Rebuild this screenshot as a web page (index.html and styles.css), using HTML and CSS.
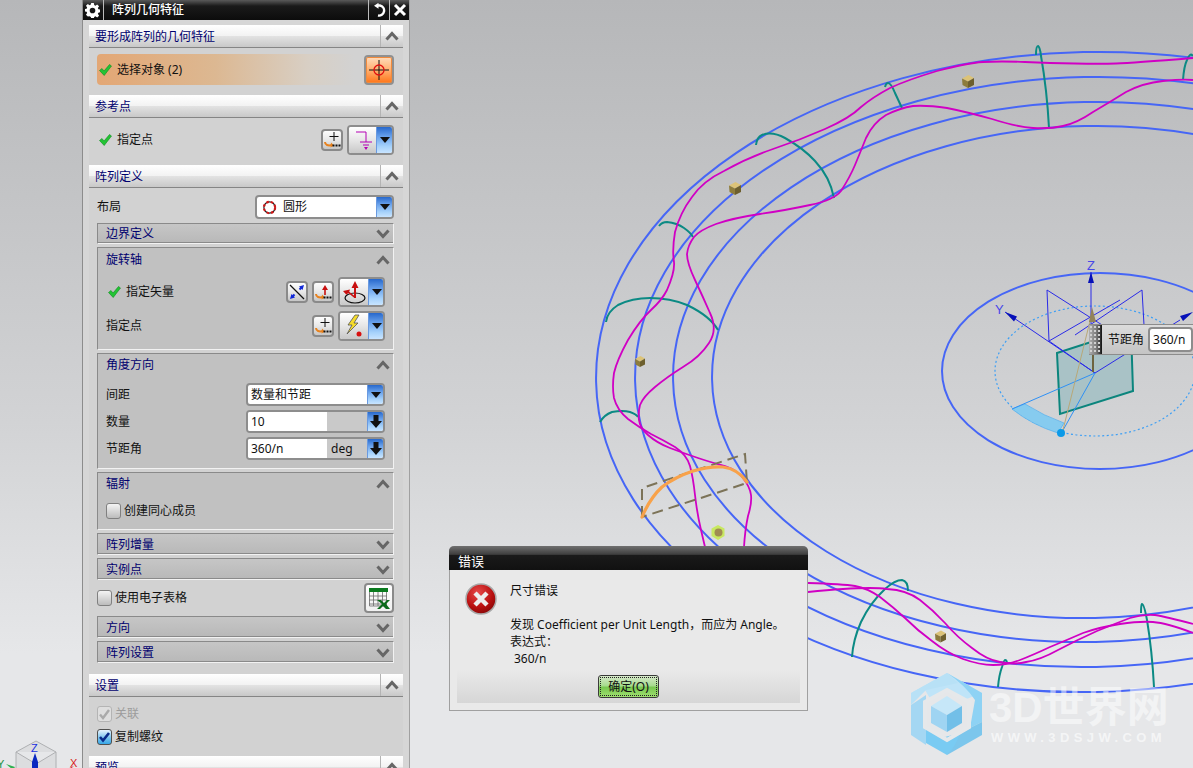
FILE: index.html
```html
<!DOCTYPE html>
<html lang="zh">
<head>
<meta charset="utf-8">
<title>阵列几何特征</title>
<link rel="stylesheet" href="styles.css">
</head>
<body>
<svg class="defs" width="0" height="0" aria-hidden="true">
  <symbol id="up" viewBox="0 0 14 10"><path d="M1.5 8.5 7 2.5l5.5 6" fill="none" stroke="#666" stroke-width="3"/></symbol>
  <symbol id="down" viewBox="0 0 14 10"><path d="M1.5 1.5 7 7.5l5.5-6" fill="none" stroke="#666" stroke-width="3"/></symbol>
  <symbol id="check" viewBox="0 0 13 12"><path d="M0.5 6.5 3 4.5 5 7 10.5 0.5 12.5 2 5.2 11.5z" fill="#22c433" stroke="#0f8a20" stroke-width=".6"/></symbol>
  <symbol id="tri" viewBox="0 0 10 6"><path d="M0 0h10L5 6z" fill="#111"/></symbol>
  <symbol id="blockdown" viewBox="0 0 12 13"><path d="M3.5 0h5v6H12L6 13 0 6h3.5z" fill="#111"/></symbol>
  <symbol id="construct" viewBox="0 0 18 18">
    <path d="M2 11c0 3 3 4 7 3" fill="none" stroke="#e8821e" stroke-width="2"/><path d="M8 11.500 11 14.500 7.500 16.500z" fill="#e8821e"/>
    <path d="M9.500 12.500h2v2h-2zM12.500 12.500h2v2h-2zM15.500 12.500h2v2h-2z" fill="#111" transform="translate(0 1)"/>
  </symbol>
  <symbol id="cube" viewBox="0 0 12 13">
    <path d="M0 3.500 6.500 0 12 3 6 6.500z" fill="#dcc378"/><path d="M0 3.500 6 6.500V13L.5 10z" fill="#8d7c3c"/><path d="M12 3 6 6.500V13l6-3z" fill="#6d5f2e"/>
  </symbol>
</svg>

<main class="app">
  <svg class="scene" viewBox="0 0 1193 768" width="1193" height="768" aria-hidden="true">
    <g class="blue" transform="rotate(-1.2 1090 372)">
      <ellipse cx="1090" cy="372" rx="494" ry="320"/>
      <ellipse cx="1090" cy="372" rx="455" ry="295"/>
      <ellipse cx="1090" cy="372" rx="417" ry="270"/>
      <ellipse cx="1090" cy="372" rx="378" ry="246"/>
    </g>
    <g class="teal">
      <path d="M756 145Q757 137 762 135 772 131 785 138 803 148 815 161 830 177 834 198"/>
      <path d="M659 226Q662 222 667 222 677 223 684 228 691 233 693 237"/>
      <path d="M606 322Q607 312 618 305 632 298 650 298 670 298 687 305 710 316 718 330"/>
      <path d="M600 422Q604 415 612 412 623 410 630 412 636 414 638 417"/>
      <path d="M885 87Q886 83 888 83 891 83 895 93L902 108"/>
      <path d="M1036 55Q1036 46 1038 46 1040 47 1041 56 1047 90 1049 128"/>
      <path d="M1183 80Q1184 66 1187 60 1190 52 1193 56"/>
      <path d="M852 657Q853 640 861 622 870 603 885 589 895 580 902 580 908 581 908 591"/>
      <path d="M998 687Q999 675 1002 667 1004 660 1005 660 1007 660 1007 664"/>
      <path d="M1141 613Q1141 605 1142 604 1144 604 1147 620 1152 650 1154 687"/>
    </g>
    <g class="magenta">
      <path d="M1193 58Q1133 63 1116 63.500 1100 64 1075 63.500 1050 63 1025 62 1000 61 983 62 967 63 937 71 907 80 890 88 873 97 861 107 850 118 825 129 800 140 773 149 747 158 724 171 703 181 692 197 680 213 675 232 672 250 674 262 675 272 667 290 662 300 651 310 640 320 628 340 617 360 614 373 612 387 614 398 617 410 628 419 640 428 651 434 663 440 675 447 687 455 690 466 693 477 695 495 697 513 701 530L705 547"/>
      <path d="M1193 80Q1183 79 1163 81 1143 83 1126 92 1110 102 1093 112 1077 123 1063 126 1050 129 1033 128 1017 127 992 119 967 112 947 108 927 105 913 106 900 108 886 115 873 123 866 138 860 153 855 165 850 177 841 191 834 200 810 205 787 210 760 214 733 218 716 224 700 230 694 237 688 245 687 254 687 263 695 280 703 297 710 313 718 330 709 343 700 357 683 367 667 377 655 387 643 397 640 405 638 413 639 420 640 428 648 435 657 443 670 448 683 453 698 458 713 463 725 466 737 470 743 478 750 487 751 495 752 503 748 516 745 530 744 547"/>
      <path d="M808 583Q843 584 855 586 867 588 880 597 893 607 905 618 917 630 932 641 947 653 963 659 980 665 993 665 1007 665 1020 660 1033 655 1050 647 1067 640 1083 633 1100 627 1120 624 1140 621 1153 622 1167 623 1193 633"/>
      <path d="M808 592Q867 586 887 589 907 590 920 600 933 610 945 623 957 637 972 648 987 660 1000 662 1013 665 1026 662 1040 660 1058 650 1077 640 1097 631 1117 623 1130 618 1143 614 1155 615 1167 617 1193 624"/>
    </g>
    <use href="#cube" x="962" y="75" width="12" height="13"/>
    <use href="#cube" x="729" y="182" width="12" height="13"/>
    <use href="#cube" x="635" y="355" width="10" height="13"/>
    <use href="#cube" x="935" y="630" width="11" height="13"/>
    <path class="hexgreen" d="M718 525l6.500 3.500v7.500l-6.500 4-6.500-4v-7.500z"/>
    <circle class="ball" cx="718.500" cy="532.500" r="4"/>
    <path class="dashed" d="M642 517V488L745 454 747 483z"/>
    <path class="orange" d="M642 517Q650 498 662 487 675 477 693 471 710 466 723 467 738 469 747 482"/>

    <ellipse class="single" cx="1100" cy="371" rx="158" ry="98"/>
    <ellipse class="dots" cx="1095" cy="371" rx="100" ry="65"/>
    <path class="plane" d="M1057 353 1131 329 1133 391 1060 414z"/>
    <path class="thin" d="M1047 290 1049 341 1095 373 1005 312M1047 290 1110 330M1049 341 1120 300M1142 290 1144 325M1142 290 1075 335M1095 373 1180 320M1091 272V340"/>
    <path class="band" d="M1012 409Q1032 425 1058 433L1064 423Q1044 416 1025 404z"/>
    <path class="ray" d="M1095 373 1062 432M1095 373 1012 409"/>
    <path class="shaft" d="M1063 430 1092 313"/>
    <path class="cone" d="M1092 307 1096 322H1089z"/>
    <path class="darkline" d="M1093 340V372"/>
    <path class="arrow" d="M1091 272l-3 11h6zM1005 312l12 4.500-3 5zM1193 312l-13 4 3 5z"/>
    <circle class="sphere" cx="1061" cy="433" r="4"/>
    <text class="axis" x="1087" y="270">Z</text>
    <text class="axis" x="995" y="314">Y</text>

    <g class="triad">
      <path class="cubeline" d="M36 741 56 752V778L36 790 16 778V752zM16 752 36 764 56 752M36 764V790"/>
      <path class="tz" d="M35 753l3 9v8h-6v-8z"/>
      <path class="tx" d="M74 766 60 772l2 4z"/>
      <path class="ty" d="M6 764l9 3-2 3z"/>
      <text class="tl-z" x="31" y="752">Z</text>
      <text class="tl-y" x="-3" y="768">Y</text>
      <text class="tl-x" x="70" y="767">X</text>
    </g>

    <g class="logo">
      <path fill="#bfe4f8" d="M947 673 982 693 964 700 947 690 931 700 925 690 911 693z"/>
      <path fill="#8ed2f4" d="M947 673 982 693V722L970 728 975 700Q965 685 947 673z"/>
      <path fill="#7cc6ec" d="M982 722V735L947 755 955 737 970 728z"/>
      <path fill="#79cbf3" d="M947 755 926 743 926 727 945 737 960 733Q955 748 947 755z"/>
      <path fill="#a4d7f3" d="M911 735V705L926 695V745z"/>
      <path fill="#b8e1f6" d="M911 693 947 673 958 683 926 690 911 705z"/>
      <path class="frame" d="M947 690 969 702V727L947 740 925 727V702z"/>
      <path fill="#c6e7f8" d="M947 696 962 706 947 715 931 706z"/>
      <path fill="#9fd4f2" d="M931 706 947 715V732L931 723z"/>
      <path fill="#72bfe8" d="M962 706 947 715V732L962 723z"/>
    </g>
    <text class="wm-big" x="989" y="722">3D世界网</text>
    <text class="wm-small" x="991" y="742">WWW.3DSJW.COM</text>
  </svg>

  <section class="panel">
    <header class="titlebar">
      <span class="tb-cell tb-gear">
        <svg width="15" height="15" viewBox="0 0 16 16"><path fill="#fff" d="M6.600 0h2.800l.4 2.200 1.300.6L13 1.500l2 2-1.300 1.900.6 1.300 2.200.4v2.800l-2.200.4-.6 1.300 1.300 1.900-2 2-1.900-1.300-1.300.6-.4 2.200H6.600l-.4-2.200-1.300-.6L3 14.500l-2-2 1.300-1.900-.6-1.300L-.5 9V6.600l2.200-.4.600-1.300L1 3l2-2 1.900 1.300 1.300-.6zM8 5a3 3 0 1 0 0 6 3 3 0 0 0 0-6z"/></svg>
      </span>
      <span class="tb-title">阵列几何特征</span>
      <span class="tb-cell tb-btn">
        <svg width="14" height="14" viewBox="0 0 14 14"><path fill="none" stroke="#fff" stroke-width="2.400" d="M6 12.500a5 5 0 0 0 2-10H5"/><path fill="#fff" d="M6.500 0v6L2 3z" transform="translate(0 -.200)"/></svg>
      </span>
      <span class="tb-cell tb-btn">
        <svg width="14" height="14" viewBox="0 0 14 14"><path fill="none" stroke="#fff" stroke-width="3" d="M2 2l10 10M12 2 2 12"/></svg>
      </span>
    </header>

    <div class="sec-head"><span class="head-title">要形成阵列的几何特征</span><span class="chev-cell"><svg class="chev"><use href="#up"/></svg></span></div>
    <div class="sec-body body-select">
      <div class="row">
        <div class="pick">
          <svg class="check"><use href="#check"/></svg>
          <span class="pick-text">选择对象 (2)</span>
        </div>
        <button class="btn btn-orange" type="button">
          <svg width="20" height="20" viewBox="0 0 20 20"><path d="M0 10h20M10 0v20" stroke="#111" stroke-width="1"/><circle cx="10" cy="10" r="5" fill="none" stroke="#e01010" stroke-width="1.300"/></svg>
        </button>
      </div>
    </div>

    <div class="sec-head"><span class="head-title">参考点</span><span class="chev-cell"><svg class="chev"><use href="#up"/></svg></span></div>
    <div class="sec-body body-point">
      <div class="row">
        <svg class="check"><use href="#check"/></svg>
        <span class="check-label">指定点</span>
        <div class="tools">
          <button class="btn btn-small" type="button"><svg width="18" height="18" viewBox="0 0 18 18"><use href="#construct"/><path d="M11 1v9M6.500 5.500h9" stroke="#111"/></svg></button>
          <div class="combo combo-icon">
            <span class="icon-face"><svg width="24" height="22" viewBox="0 0 24 22"><path d="M5 3h10v10M9 13h12M12 16h6" fill="none" stroke="#b400b4" stroke-width="1"/><path d="M13 18h4l-2 3z" fill="#b400b4"/></svg></span>
            <span class="drop"><svg class="tri"><use href="#tri"/></svg></span>
          </div>
        </div>
      </div>
    </div>

    <div class="sec-head"><span class="head-title">阵列定义</span><span class="chev-cell"><svg class="chev"><use href="#up"/></svg></span></div>
    <div class="sec-body body-def">
      <div class="row row-layout">
        <span>布局</span>
        <div class="combo combo-layout">
          <span class="combo-value"><svg class="ring" width="15" height="15" viewBox="0 0 15 15"><circle cx="7.500" cy="7.500" r="5.600" fill="none" stroke="#222" stroke-width="1.200"/><circle cx="7.500" cy="7.500" r="5.600" fill="none" stroke="#d01818" stroke-width="2.200" stroke-dasharray="2.500 2"/></svg>圆形</span>
          <span class="drop"><svg class="tri"><use href="#tri"/></svg></span>
        </div>
      </div>

      <div class="sub sub-closed first"><span class="sub-title">边界定义</span><svg class="chev"><use href="#down"/></svg></div>

      <div class="sub sub-axis">
        <div class="sub-head"><span class="sub-title">旋转轴</span><svg class="chev"><use href="#up"/></svg></div>
        <div class="sub-rows rows-axis">
          <div class="row">
            <svg class="check"><use href="#check"/></svg>
            <span class="check-label">指定矢量</span>
            <div class="tools">
              <button class="btn btn-small" type="button"><svg width="18" height="18" viewBox="0 0 18 18"><path d="M2 2l14 14" stroke="#111" stroke-width="1.300"/><path d="M16 2l-5 1.500L14.500 7zM2 16l5-1.500L3.500 11z" fill="#1028d8"/><path d="M14 4l-2.500 2.500M4 14l2.500-2.500" stroke="#1028d8" stroke-width="2"/></svg></button>
              <button class="btn btn-small" type="button"><svg width="18" height="18" viewBox="0 0 18 18"><use href="#construct"/><path d="M11 2l3 5h-2.200v5h-1.600V7H8z" fill="#c81010"/></svg></button>
              <div class="combo combo-icon">
                <span class="icon-face"><svg width="28" height="26" viewBox="0 0 28 26"><ellipse cx="15" cy="19" rx="10" ry="5" fill="none" stroke="#111" stroke-width="1.200"/><path d="M15 2l3.500 7h-2.500v10h-2V9h-2.500z" fill="#c81010"/><path d="M3 12l7-1.500-.8 2.300 6 4.700-1 1.200-6-4.700-1.800 1.700z" fill="#c81010"/></svg></span>
                <span class="drop"><svg class="tri"><use href="#tri"/></svg></span>
              </div>
            </div>
          </div>
          <div class="row">
            <span>指定点</span>
            <div class="tools">
              <button class="btn btn-small" type="button"><svg width="18" height="18" viewBox="0 0 18 18"><use href="#construct"/><path d="M11 1v9M6.500 5.500h9" stroke="#111"/></svg></button>
              <div class="combo combo-icon">
                <span class="icon-face"><svg width="28" height="26" viewBox="0 0 28 26"><path d="M15 2 8 12h4l-5 9 11-11h-4l5-8z" fill="#f6dc2a" stroke="#555" stroke-width=".8"/><circle cx="19" cy="21" r="2.500" fill="#d81010"/></svg></span>
                <span class="drop"><svg class="tri"><use href="#tri"/></svg></span>
              </div>
            </div>
          </div>
        </div>
      </div>

      <div class="sub sub-angle">
        <div class="sub-head"><span class="sub-title">角度方向</span><svg class="chev"><use href="#up"/></svg></div>
        <div class="sub-rows rows-angle">
          <div class="row row-between">
            <span>间距</span>
            <div class="combo combo-field">
              <span class="combo-value">数量和节距</span>
              <span class="drop"><svg class="tri"><use href="#tri"/></svg></span>
            </div>
          </div>
          <div class="row row-between">
            <span>数量</span>
            <div class="combo combo-field">
              <span class="field-value">10</span><span class="field-unit"></span>
              <span class="drop"><svg class="block"><use href="#blockdown"/></svg></span>
            </div>
          </div>
          <div class="row row-between">
            <span>节距角</span>
            <div class="combo combo-field">
              <span class="field-value">360/n</span><span class="field-unit">deg</span>
              <span class="drop"><svg class="block"><use href="#blockdown"/></svg></span>
            </div>
          </div>
        </div>
      </div>

      <div class="sub sub-radial">
        <div class="sub-head"><span class="sub-title">辐射</span><svg class="chev"><use href="#up"/></svg></div>
        <div class="sub-rows rows-radial">
          <div class="row row-check"><span class="box"></span><span>创建同心成员</span></div>
        </div>
      </div>

      <div class="sub sub-closed"><span class="sub-title">阵列增量</span><svg class="chev"><use href="#down"/></svg></div>
      <div class="sub sub-closed"><span class="sub-title">实例点</span><svg class="chev"><use href="#down"/></svg></div>

      <div class="row row-sheet">
        <span class="box"></span><span class="sheet-label">使用电子表格</span>
        <button class="btn btn-sheet" type="button">
          <svg width="22" height="24" viewBox="0 0 22 24"><path d="M1 2h19v4H1z" fill="#0a7a1e"/><path d="M1.500 6v14h17V6M1 10h18M1 14h18M1 18h18M5.500 6v14M10 6v14M14.500 6v14" fill="none" stroke="#6a6a6a" stroke-width=".8"/><path d="M9 14h4l3 3 3-3h3l-4 4 4 5h-4l-3-3-3 3H9l5-5z" fill="#0a6a1a"/></svg>
        </button>
      </div>

      <div class="sub sub-closed"><span class="sub-title">方向</span><svg class="chev"><use href="#down"/></svg></div>
      <div class="sub sub-closed last"><span class="sub-title">阵列设置</span><svg class="chev"><use href="#down"/></svg></div>
    </div>

    <div class="sec-head"><span class="head-title">设置</span><span class="chev-cell"><svg class="chev"><use href="#up"/></svg></span></div>
    <div class="sec-body body-settings">
      <div class="row row-check disabled">
        <span class="box box-off"><svg width="13" height="13" viewBox="0 0 13 13"><path d="M2 6.500 5 10l6-8" fill="none" stroke="#aaa" stroke-width="2.400"/></svg></span><span>关联</span>
      </div>
      <div class="row row-check">
        <span class="box box-on"><svg width="13" height="13" viewBox="0 0 13 13"><path d="M2 6 5 9.500l6-7.500" fill="none" stroke="#0a2a8a" stroke-width="2.600"/></svg></span><span>复制螺纹</span>
      </div>
    </div>
    <div class="sec-head"><span class="head-title">预览</span><span class="chev-cell"><svg class="chev"><use href="#up"/></svg></span></div>
  </section>

  <div class="handle">
    <span class="grip"></span>
    <span class="handle-label">节距角</span>
    <span class="handle-input">360/n</span>
    <span class="handle-drop"></span>
  </div>

  <section class="dialog">
    <header class="dlg-title">错误</header>
    <div class="dlg-main">
      <svg class="dlg-icon" width="32" height="32" viewBox="0 0 32 32">
        <defs><radialGradient id="err" cx=".4" cy=".3" r=".8"><stop offset="0" stop-color="#e84a4a"/><stop offset=".6" stop-color="#b81010"/><stop offset="1" stop-color="#7a0606"/></radialGradient></defs>
        <circle cx="16" cy="16" r="15" fill="url(#err)" stroke="#a8a8a8" stroke-width="1.500"/>
        <path d="M10 10l12 12M22 10 10 22" stroke="#eee" stroke-width="4.500"/>
      </svg>
      <div class="dlg-text">
        <p class="dlg-head">尺寸错误</p>
        <p>发现 Coefficient per Unit Length，而应为 Angle。</p>
        <p>表达式：</p>
        <p class="dlg-expr">360/n</p>
      </div>
    </div>
    <footer class="dlg-foot"><button class="dlg-ok" type="button"><span>确定(O)</span></button></footer>
  </section>
</main>
</body>
</html>
```

FILE: styles.css
```css
* { box-sizing: border-box; }
html, body { margin: 0; padding: 0; }
body { font: 12px/16px "Noto Sans", "Noto Sans CJK SC", sans-serif; color: #111; }
p { margin: 0; }
button { font: inherit; padding: 0; }
.defs { position: absolute; }

.app {
  position: relative;
  width: 1193px;
  height: 768px;
  overflow: hidden;
  background: linear-gradient(#b6b7b9, #d2d3d5 55%, #e6e7e9 85%);
}

/* 3D scene */
.scene { position: absolute; left: 0; top: 0; }
.blue ellipse, .single { fill: none; stroke: #4666f6; stroke-width: 2; }
.teal path { fill: none; stroke: #0b8a84; stroke-width: 2; }
.magenta path { fill: none; stroke: #d000c4; stroke-width: 1.800; }
.hexgreen { fill: #c8e860; }
.ball { fill: #a08c52; }
.dashed { fill: none; stroke: #7c7358; stroke-width: 2; stroke-dasharray: 11 6; }
.orange { fill: none; stroke: #f8a24a; stroke-width: 3.200; stroke-linecap: round; }
.dots { fill: none; stroke: #3d9ff5; stroke-width: 1.200; stroke-dasharray: 2 2.500; }
.plane { fill: #a9c2c6; stroke: #0b857d; stroke-width: 2; }
.thin { fill: none; stroke: #2a2ae8; stroke-width: 1; }
.band { fill: #86cbef; stroke: #5ab2ee; stroke-width: .8; }
.ray { fill: none; stroke: #2e90f5; stroke-width: 1; }
.shaft { fill: none; stroke: #b8a878; stroke-width: 1; }
.cone { fill: #93835a; }
.darkline { fill: none; stroke: #6e6440; stroke-width: 2; }
.arrow { fill: #0610b8; }
.sphere { fill: #0c9ae8; }
.axis { font: 13px "Liberation Sans", sans-serif; fill: #4848e8; }
.cubeline { stroke: #aeb0b2; stroke-width: 1; fill: #dcdddf; }
.tz { fill: #0a28c0; }
.tx { fill: #d82020; }
.ty { fill: #30b050; }
.tl-z, .tl-y, .tl-x { font: 11px "Liberation Sans", sans-serif; }
.tl-z { fill: #2030e0; }
.tl-y { fill: #209040; }
.tl-x { fill: #d82020; }
.frame { fill: none; stroke: #e6e8ea; stroke-width: 4; }
.wm-big { font: bold 42px "Liberation Sans", "Noto Sans CJK SC", sans-serif; fill: #fff; fill-opacity: .5; }
.wm-small { font: bold 13px "Liberation Sans", sans-serif; letter-spacing: 4.400px; fill: #fff; fill-opacity: .6; }

/* Panel */
.panel {
  position: relative;
  margin-left: 82px;
  width: 328px;
  height: 768px;
  background: #d6d6d6;
  border-left: 1px solid #8c8c8c;
  border-right: 1px solid #a0a0a0;
  overflow: hidden;
}
.titlebar {
  display: flex;
  align-items: center;
  height: 20px;
  margin: 0 -1px 5px;
  background: linear-gradient(#5a5a5a, #1a1a1a 30%, #0c0c0c);
  color: #fff;
}
.tb-cell { display: flex; align-items: center; justify-content: center; height: 20px; }
.tb-gear { width: 22px; border-right: 1px solid #bbb; }
.tb-title { flex: 1; padding-left: 8px; font-weight: 500; line-height: 20px; }
.tb-btn { width: 21px; border-left: 1px solid #bbb; }

.sec-head {
  display: flex;
  align-items: stretch;
  height: 23px;
  margin: 0 6px;
  background: linear-gradient(#ffffff, #f2f2f2 50%, #e2e2e2 52%, #c8c8c8);
  border-bottom: 1px solid #858585;
  color: #00006e;
}
.head-title { flex: 1; padding-left: 6px; line-height: 24px; }
.chev-cell { display: flex; align-items: center; justify-content: center; width: 23px; border-left: 1px solid #b4b4b4; }
.chev { width: 14px; height: 10px; flex: none; }

.sec-body { margin: 0 6px; padding: 0 9px 0 8px; background: #d2d2d2; }
.body-select { height: 47px; padding-top: 6px; }
.body-point { height: 47px; padding-top: 7px; }
.body-def { height: 486px; padding-top: 7px; }
.body-settings { height: 59px; padding-top: 9px; }

.row { display: flex; align-items: center; }
.row-between { justify-content: space-between; }
.row-layout { justify-content: space-between; height: 24px; margin-bottom: 4px; }
.tools { display: flex; align-items: center; gap: 4px; margin-left: auto; }
.check { width: 13px; height: 12px; margin-left: 2px; flex: none; }
.check-label { margin-left: 5px; }

.pick {
  flex: 1;
  display: flex;
  align-items: center;
  height: 31px;
  border-radius: 4px;
  background: linear-gradient(90deg, #e3a775, #dcb892 45%, #d8cfc4 80%, #d2d2d2 98%);
}
.pick-text { margin-left: 5px; }

.btn {
  display: flex;
  align-items: center;
  justify-content: center;
  border: 2px solid #8a8a8a;
  border-radius: 4px;
  background: linear-gradient(#fdfdfd, #e8e8e8 50%, #c6c6c6);
}
.btn-orange { width: 30px; height: 30px; margin-left: 4px; border-color: #909090; background: linear-gradient(#ffdcbc, #ffb070 50%, #ff7418); box-shadow: inset 0 0 0 1px #f08a3c; }
.btn-small { width: 22px; height: 22px; }
.btn-sheet { width: 30px; height: 30px; margin-left: auto; background: linear-gradient(#fff, #f0f0f0); }

.combo {
  display: flex;
  align-items: stretch;
  border: 2px solid #8d8d8d;
  border-radius: 4px;
  background: #fff;
  overflow: hidden;
}
.combo-icon { width: 47px; height: 30px; }
.combo-layout { width: 139px; height: 24px; }
.combo-field { width: 139px; height: 23px; }
.icon-face { flex: 1; display: flex; align-items: center; justify-content: center; background: linear-gradient(#fff, #e6e6e6 50%, #c8c8c8); }
.combo-value { flex: 1; display: flex; align-items: center; padding-left: 3px; }
.ring { margin-right: 6px; margin-left: 2px; }
.drop {
  display: flex;
  align-items: center;
  justify-content: center;
  width: 16px;
  flex: none;
  border-left: 1px solid #6a9ae0;
  background: linear-gradient(#2768cc, #6ea6ee 40%, #a6d2fb 75%, #c8e4ff);
}
.tri { width: 10px; height: 6px; }
.block { width: 12px; height: 13px; }
.field-value { width: 79px; padding-left: 3px; line-height: 19px; background: #fff; }
.field-unit { flex: 1; padding-left: 4px; line-height: 20px; background: #c9c9c9; }

.sub {
  margin-bottom: 3px;
  background: #c1c1c1;
  border-top: 1px solid #8a8a8a;
  border-left: 1px solid #8a8a8a;
  border-right: 1px solid #f2f2f2;
  border-bottom: 1px solid #f2f2f2;
}
.sub-closed {
  display: flex;
  align-items: center;
  justify-content: space-between;
  height: 22px;
  padding: 2px 3px 0 8px;
  color: #00006e;
  background: linear-gradient(#c6c6c6, #b8b8b8);
  box-shadow: inset 0 -1px 0 #8a8a8a;
}
.sub-closed.first { height: 21px; padding-top: 0; }
.sub-closed.last { margin-bottom: 0; }
.sub-head { display: flex; align-items: center; justify-content: space-between; height: 23px; padding: 0 3px 0 8px; color: #00006e; }
.sub-angle .sub-head, .sub-radial .sub-head { height: 22px; }
.sub-axis { height: 103px; }
.sub-angle { height: 116px; }
.sub-radial { height: 58px; }
.sub-rows { padding: 6px 8px 0 8px; display: flex; flex-direction: column; }
.rows-axis { gap: 4px; padding-top: 6px; }
.rows-angle { gap: 4px; padding-top: 7px; }
.rows-radial { padding-top: 8px; }

.box {
  display: flex;
  align-items: center;
  justify-content: center;
  width: 15px;
  height: 16px;
  flex: none;
  border: 1px solid #808080;
  border-radius: 3px;
  background: linear-gradient(#f4f4f4, #d8d8d8 50%, #bcbcbc);
}
.row-check .box { margin-right: 3px; }
.row-check + .row-check { margin-top: 7px; }
.box-off { border-color: #b4b4b4; background: #dedede; }
.box-on { border-color: #50504f; background: linear-gradient(#e8f4ff, #7cc4ee 55%, #38a8e8); }
.disabled { color: #9c9c9c; }

.row-sheet { height: 30px; margin-top: 1px; margin-bottom: 3px; }
.sheet-label { margin-left: 3px; }

/* Floating angle handle */
.handle {
  position: absolute;
  left: 1089px;
  top: 324px;
  display: flex;
  align-items: center;
  width: 120px;
  height: 31px;
  background: linear-gradient(#dcdcdc, #d0d0d0 50%, #c4c4c4);
  border-top: 1px solid #8c8c8c;
  border-bottom: 1px solid #8c8c8c;
}
.grip {
  align-self: stretch;
  width: 13px;
  background-color: #333;
  background-image: radial-gradient(#d0d0d0 1px, transparent 1.300px), linear-gradient(90deg, #b0b0b0, #777 60%, #111);
  background-size: 4px 4px, 100% 100%;
}
.handle-label { margin-left: 6px; }
.handle-input { width: 45px; height: 25px; margin-left: 4px; padding-left: 3px; line-height: 21px; background: #fff; border: 2px solid #8d8d8d; border-radius: 4px; }
.handle-drop { width: 12px; height: 25px; background: linear-gradient(#2768cc, #a6d2fb); }

/* Error dialog */
.dialog {
  position: absolute;
  left: 449px;
  top: 546px;
  width: 359px;
  height: 165px;
  display: flex;
  flex-direction: column;
  background: #e9e9e9;
  border: 1px solid #a0a0a0;
  border-top: 0;
  border-radius: 5px 5px 0 0;
}
.dlg-title {
  height: 24px;
  margin: 0 -1px;
  padding: 7px 0 0 9px;
  line-height: 16px;
  font-size: 13px;
  color: #fff;
  background: linear-gradient(#707070, #3e3e3e 35%, #1a1a1a 38%, #111);
  border-radius: 5px 5px 0 0;
}
.dlg-main { display: flex; flex: 1; padding: 12px 0 0 15px; }
.dlg-icon { flex: none; margin-top: 1px; }
.dlg-text { margin-left: 13px; line-height: 17px; }
.dlg-head { margin-bottom: 17px; }
.dlg-expr { padding-left: 4px; }
.dlg-foot {
  display: flex;
  justify-content: center;
  align-items: flex-start;
  height: 33px;
  margin: 0 7px 7px;
  padding-top: 5px;
  background: linear-gradient(#e9e9e9, #d6d6d6);
}
.dlg-ok {
  width: 61px;
  height: 23px;
  padding: 1px;
  border: 1px solid #3a3a3a;
  border-radius: 3px;
  background: linear-gradient(#d6e8ca, #a8dc90 45%, #78c850 55%, #a0e070);
  color: #111;
}
.dlg-ok span { display: block; line-height: 17px; border: 1px dotted #222; }
```
